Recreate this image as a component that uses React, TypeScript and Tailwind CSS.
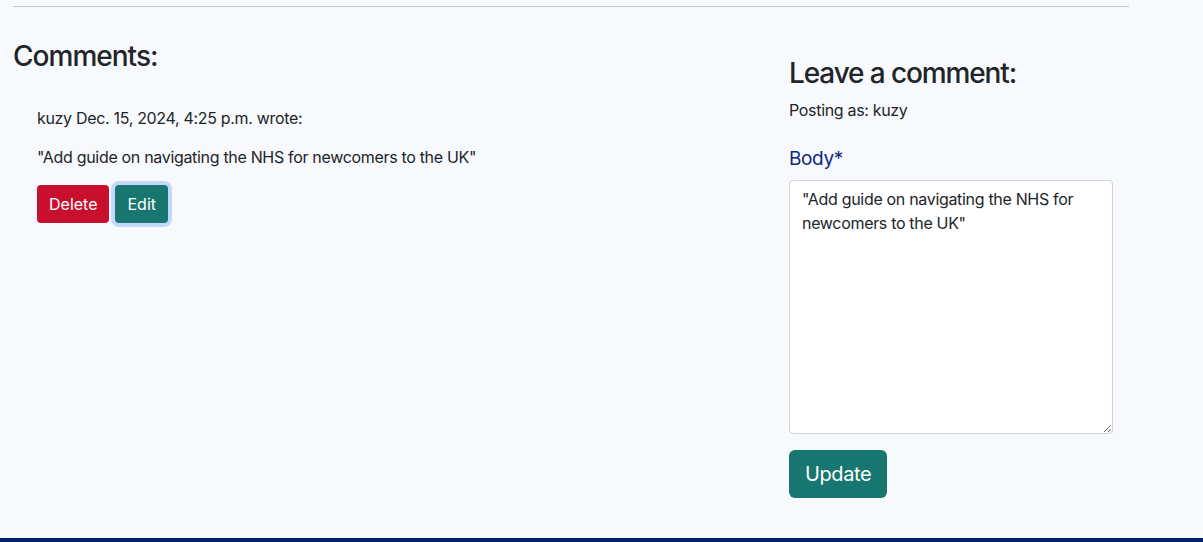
export default function App() {
  return (
    <div
      className="flex min-h-[542px] flex-col bg-[#f8f9fc] text-[#212529]"
      style={{ fontFamily: 'Inter, "Noto Sans", sans-serif' }}
    >
      <div className="ml-[1px] w-[1140px] px-3">
        <hr className="mt-[6px] border-t border-[#c5c6cc]" />
        <div className="flex">
          {/* comments list */}
          <div className="w-[760px] pr-3">
            <h3 className="mt-[32px] text-[28px] font-medium leading-[34px] tracking-[-0.035em]">Comments:</h3>
            <div className="mt-[33px] pl-6 text-base leading-6 tracking-[-0.02em]">
              <p>
                <span>kuzy</span> <span>Dec. 15, 2024, 4:25 p.m.</span> wrote:
              </p>
              <p className="mt-[15px]">"Add guide on navigating the NHS for newcomers to the UK"</p>
              <div className="mt-4 flex gap-[6px] tracking-normal">
                <button className="h-[38px] rounded-[4px] bg-[#c8102e] px-3 text-base text-white">
                  Delete
                </button>
                <button className="h-[38px] rounded-[4px] bg-[#17766f] px-3 text-base text-white ring-4 ring-[#c2d9fc]">
                  Edit
                </button>
              </div>
            </div>
          </div>

          {/* comment form */}
          <div className="w-[356px] p-4 pr-0">
            <h3 className="mt-[33px] text-[28px] font-medium leading-[34px] tracking-[-0.04em]">Leave a comment:</h3>
            <p className="mt-2 text-base leading-6 tracking-[-0.02em]">Posting as: kuzy</p>
            <label className="mt-[22px] block text-[19px] leading-[30px] tracking-[-0.02em] text-[#0a2a80]">Body*</label>
            <textarea
              className="mt-[6px] block h-[254px] w-[324px] rounded-[4px] border border-[#ced4da] bg-white px-3 py-[6px] text-base leading-6 tracking-[-0.02em] text-[#212529] outline-none"
              defaultValue={'"Add guide on navigating the NHS for newcomers to the UK"'}
            />
            <button className="mt-4 h-12 rounded-[6px] bg-[#17766f] px-4 text-xl tracking-[-0.02em] text-white">Update</button>
          </div>
        </div>
      </div>
      <div className="mt-auto h-[4px] bg-[#012169]" />
    </div>
  )
}
